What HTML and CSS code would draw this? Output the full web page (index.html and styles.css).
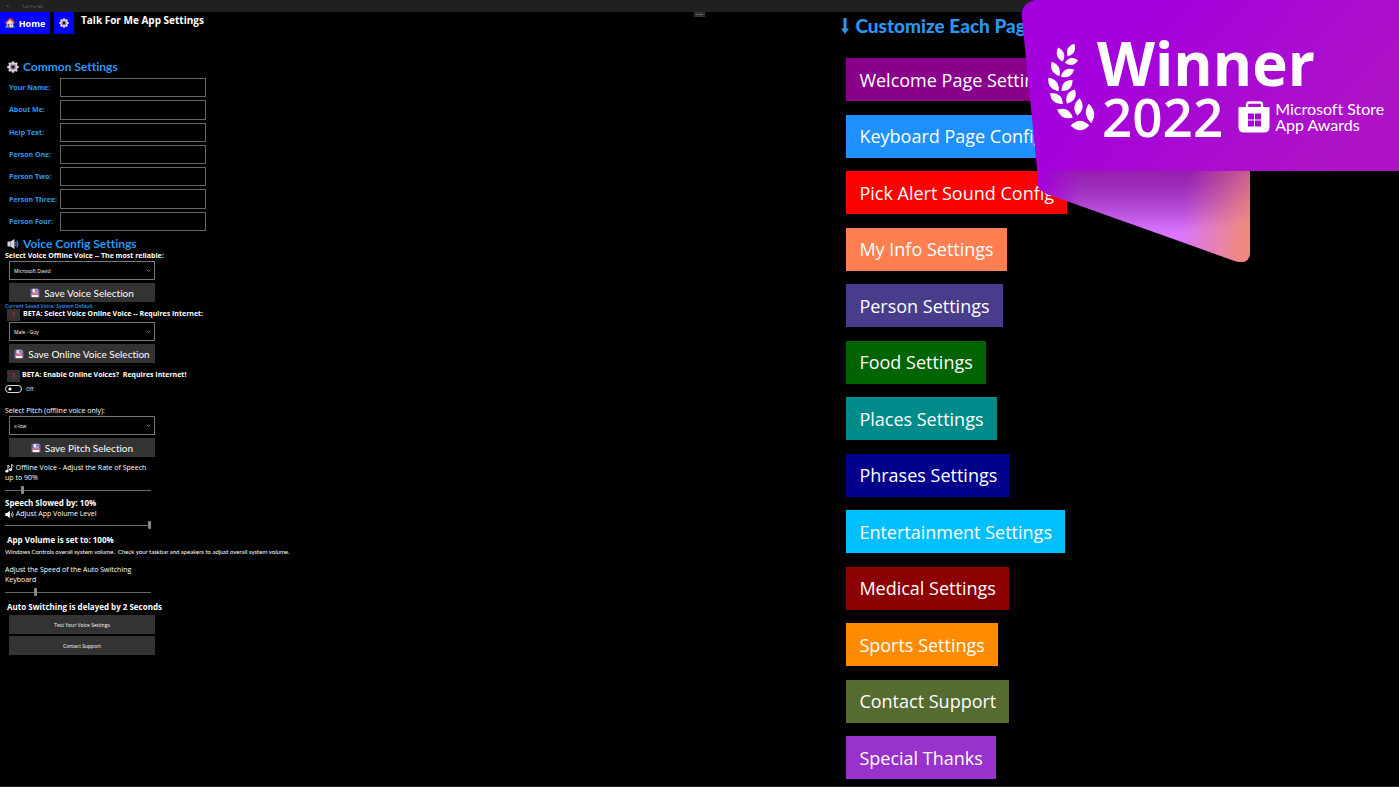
FILE: index.html
```html
<!DOCTYPE html>
<html lang="en">
<head>
<meta charset="utf-8">
<title>Talk For Me</title>
<link rel="stylesheet" href="styles.css">
</head>
<body>
<svg class="defs" aria-hidden="true">
  <symbol id="gear" viewBox="0 0 24 24">
    <g fill="#d9cfe0">
      <rect x="9.5" y="0.5" width="5" height="23" rx="1.5"/>
      <rect x="9.5" y="0.5" width="5" height="23" rx="1.5" transform="rotate(45 12 12)"/>
      <rect x="9.5" y="0.5" width="5" height="23" rx="1.5" transform="rotate(90 12 12)"/>
      <rect x="9.5" y="0.5" width="5" height="23" rx="1.5" transform="rotate(135 12 12)"/>
      <circle cx="12" cy="12" r="9"/>
    </g>
    <circle cx="12" cy="12" r="6" fill="#8d8496"/>
    <circle cx="12" cy="12" r="3.6" fill="#15131a"/>
    <path d="M12 5v4M12 15v4M5 12h4M15 12h4" stroke="#d9cfe0" stroke-width="1.6"/>
  </symbol>
  <symbol id="floppy" viewBox="0 0 24 24">
    <path d="M1 2h19l3 3v17H1z" fill="#6f5aa8"/>
    <rect x="6" y="2" width="12" height="9" fill="#efe6f4"/>
    <rect x="13" y="3" width="3" height="6" fill="#3c2f63"/>
    <rect x="4" y="13" width="16" height="9" fill="#f7f1f5"/>
    <rect x="4" y="13" width="16" height="3.5" fill="#e0505c"/>
  </symbol>
  <symbol id="mark" viewBox="0 0 12 12">
    <path d="M5 4.200C5.200 3.300 7.200 3.500 6.900 4.700c-0.100 0.700-0.900 0.900-0.900 1.900" fill="none" stroke="#d0182f" stroke-width="1.200"/>
    <rect x="5.400" y="7.400" width="1.200" height="1.200" fill="#d0182f"/>
  </symbol>
</svg>

<header class="titlebar">
  <svg class="back" viewBox="0 0 10 10"><path d="M9 5H1.500M4.500 2l-3 3 3 3" fill="none" stroke="#777"/></svg>
  <span>Talk For Me</span>
  <i class="grip"></i>
</header>

<main class="page">
  <section class="left">
    <div class="toolbar">
      <button class="home">
        <svg viewBox="0 0 24 24"><rect x="16" y="2" width="4" height="8" fill="#b4443c"/><path d="M4 11l8-8 8 8v12H4z" fill="#f3e3d3"/><path d="M0.500 12.500L12 1.500l11.500 11" fill="none" stroke="#d8483f" stroke-width="3.500"/><rect x="6" y="14" width="5" height="9" fill="#8f5b3b"/><rect x="14" y="13" width="4" height="4" fill="#4aa3e0"/><path d="M0 23c0-5 5-5 5 0zM17 23c0-5 7-5 7 0z" fill="#3fae49"/></svg>
        Home
      </button>
      <button class="cog" aria-label="Settings"><svg viewBox="0 0 24 24"><use href="#gear"/></svg></button>
      <h1>Talk For Me App Settings</h1>
    </div>

    <h2 class="section common"><svg viewBox="0 0 24 24"><use href="#gear"/></svg>Common Settings</h2>
    <form class="fields">
      <label for="f1">Your Name:</label><input id="f1" type="text">
      <label for="f2">About Me:</label><input id="f2" type="text">
      <label for="f3">Help Text:</label><input id="f3" type="text">
      <label for="f4">Person One:</label><input id="f4" type="text">
      <label for="f5">Person Two:</label><input id="f5" type="text">
      <label for="f6">Person Three:</label><input id="f6" type="text">
      <label for="f7">Person Four:</label><input id="f7" type="text">
    </form>

    <h2 class="section voice"><svg viewBox="0 0 24 24"><path d="M1 7h6l8-5v20l-8-5H1z" fill="#d9cfe0"/><path d="M7 7v10" stroke="#8d8496" stroke-width="1.500"/><path d="M17 8q3 4 0 8M19.500 5q5 7 0 14" fill="none" stroke="#4b9fe6" stroke-width="2"/></svg>Voice Config Settings</h2>
    <label class="line strong" for="offline">Select Voice Offline Voice -- The most reliable:</label>
    <select id="offline" class="control"><option>Microsoft David</option></select>
    <button class="control save"><svg viewBox="0 0 24 24"><use href="#floppy"/></svg>Save Voice Selection</button>
    <p class="saved">Current Saved Voice: System Default</p>
    <div class="beta">
      <button class="help" aria-label="Help"><svg viewBox="0 0 12 12"><use href="#mark"/></svg></button>
      <label class="line strong" for="online">BETA: Select Voice Online Voice -- Requires Internet:</label>
    </div>
    <select id="online" class="control after-beta"><option>Male - Guy</option></select>
    <button class="control save"><svg viewBox="0 0 24 24"><use href="#floppy"/></svg>Save Online Voice Selection</button>
    <div class="beta enable">
      <button class="help" aria-label="Help"><svg viewBox="0 0 12 12"><use href="#mark"/></svg></button>
      <span class="line strong">BETA: Enable Online Voices?&nbsp; Requires Internet!</span>
    </div>
    <label class="switch"><input type="checkbox">Off</label>

    <label class="line pitch" for="pitch">Select Pitch (offline voice only):</label>
    <select id="pitch" class="control"><option>x-low</option></select>
    <button class="control save"><svg viewBox="0 0 24 24"><use href="#floppy"/></svg>Save Pitch Selection</button>

    <label class="line wrap rate" for="rate"><svg viewBox="0 0 24 24"><path d="M8 18V3l5 5M18 14V1l5 5" fill="none" stroke="#fff" stroke-width="2.500"/><ellipse cx="5" cy="19" rx="4" ry="3.500" fill="#fff"/><ellipse cx="15" cy="15" rx="4" ry="3.500" fill="#fff"/></svg> Offline Voice - Adjust the Rate of Speech up to 90%</label>
    <input class="slider" id="rate" type="range" value="11">
    <p class="status first">Speech Slowed by: 10%</p>
    <label class="line" for="volume"><svg viewBox="0 0 24 24"><path d="M1 8h5l7-6v20l-7-6H1z" fill="#fff"/><path d="M16 8q3 4 0 8M19 4q6 8 0 16" fill="none" stroke="#fff" stroke-width="2"/></svg> Adjust App Volume Level</label>
    <input class="slider" id="volume" type="range" value="100">
    <p class="status inset">App Volume is set to: 100%</p>
    <p class="note">Windows Controls overall system volume.&nbsp; Check your taskbar and speakers to adjust overall system volume.</p>
    <label class="line wrap speed" for="speed">Adjust the Speed of the Auto Switching Keyboard</label>
    <input class="slider" id="speed" type="range" value="20">
    <p class="status inset">Auto Switching is delayed by 2 Seconds</p>
    <button class="control plain">Test Your Voice Settings</button>
    <button class="control plain">Contact Support</button>
  </section>

  <section class="right">
    <h2 class="customize"><svg viewBox="0 0 8 16"><path d="M2.500 0h3v10.500H8L4 16 0 10.500h2.500z" fill="#2b98f0"/></svg>Customize Each Page</h2>
    <nav class="pages">
      <button class="welcome">Welcome Page Settings</button>
      <button class="keyboard">Keyboard Page Config</button>
      <button class="alert">Pick Alert Sound Config</button>
      <button class="info">My Info Settings</button>
      <button class="person">Person Settings</button>
      <button class="food">Food Settings</button>
      <button class="places">Places Settings</button>
      <button class="phrases">Phrases Settings</button>
      <button class="fun">Entertainment Settings</button>
      <button class="medical">Medical Settings</button>
      <button class="sports">Sports Settings</button>
      <button class="contact">Contact Support</button>
      <button class="thanks">Special Thanks</button>
    </nav>
  </section>
</main>

<aside class="banner">
  <svg class="ribbon" viewBox="0 0 378 264">
    <defs>
      <linearGradient id="face" x1="0" y1="0" x2="1" y2="0.450"><stop offset="0.300" stop-color="#a400dc"/><stop offset="1" stop-color="#ae14c6"/></linearGradient>
      <linearGradient id="fold" x1="0" y1="170" x2="0" y2="240" gradientUnits="userSpaceOnUse"><stop offset="0" stop-color="#8d0fbd"/><stop offset="0.300" stop-color="#a234cf"/><stop offset="0.900" stop-color="#d975ff"/></linearGradient>
      <linearGradient id="warm" x1="165" y1="190" x2="228" y2="200" gradientUnits="userSpaceOnUse"><stop offset="0" stop-color="#f08a80" stop-opacity="0"/><stop offset="1" stop-color="#f08a80"/></linearGradient>
      <linearGradient id="shade" x1="0" y1="170" x2="0" y2="225" gradientUnits="userSpaceOnUse"><stop offset="0" stop-color="#a0309a" stop-opacity="0.450"/><stop offset="1" stop-color="#a0309a" stop-opacity="0"/></linearGradient>
      <linearGradient id="blend" x1="16" y1="0" x2="60" y2="0" gradientUnits="userSpaceOnUse"><stop offset="0" stop-color="#a400dc"/><stop offset="1" stop-color="#a400dc" stop-opacity="0"/></linearGradient>
    </defs>
    <g>
      <path d="M17 170H229V252Q229 265 214 261L26 194Q17 190 17 184Z" fill="url(#fold)"/>
      <path d="M17 170H229V252Q229 265 214 261L26 194Q17 190 17 184Z" fill="url(#warm)"/>
      <path d="M17 170H229V252Q229 265 214 261L26 194Q17 190 17 184Z" fill="url(#shade)"/>
      <path d="M17 170H60V206L26 194Q17 190 17 184Z" fill="url(#blend)"/>
    </g>
    <path d="M14 0H378V171H36Q22 171 18 189L1 18Q-1 4 14 0Z" fill="url(#face)"/>
    <g fill="#fff" transform="translate(14 -1)">
      <path d="M0-6.500Q5.500 0 0 6.500Q-5.500 0 0-6.500Z" transform="translate(36 51) rotate(28) scale(1.300 1.100)"/>
      <path d="M0-6.500Q5.500 0 0 6.500Q-5.500 0 0-6.500Z" transform="translate(25.500 55.500) rotate(-18) scale(1.300 1.150)"/>
      <path d="M0-6.500Q5.500 0 0 6.500Q-5.500 0 0-6.500Z" transform="translate(36.500 62.500) rotate(80) scale(1.300 1.050)"/>
      <path d="M0-6.500Q5.500 0 0 6.500Q-5.500 0 0-6.500Z" transform="translate(20.500 70) rotate(-28) scale(1.350 1.250)"/>
      <path d="M0-6.500Q5.500 0 0 6.500Q-5.500 0 0-6.500Z" transform="translate(32.500 74) rotate(63) scale(1.400 1.150)"/>
      <path d="M0-6.500Q5.500 0 0 6.500Q-5.500 0 0-6.500Z" transform="translate(18.500 85.500) rotate(-38) scale(1.450 1.300)"/>
      <path d="M0-6.500Q5.500 0 0 6.500Q-5.500 0 0-6.500Z" transform="translate(32 86.500) rotate(45) scale(1.450 1.200)"/>
      <path d="M0-6.500Q5.500 0 0 6.500Q-5.500 0 0-6.500Z" transform="translate(21.500 99.500) rotate(-50) scale(1.550 1.300)"/>
      <path d="M0-6.500Q5.500 0 0 6.500Q-5.500 0 0-6.500Z" transform="translate(36 97.500) rotate(30) scale(1.500 1.250)"/>
      <path d="M0-6.500Q5.500 0 0 6.500Q-5.500 0 0-6.500Z" transform="translate(30 114.500) rotate(-63) scale(1.550 1.350)"/>
      <path d="M0-6.500Q5.500 0 0 6.500Q-5.500 0 0-6.500Z" transform="translate(43.500 108) rotate(8) scale(1.500 1.350)"/>
      <path d="M0-6.500Q5.500 0 0 6.500Q-5.500 0 0-6.500Z" transform="translate(45 126.500) rotate(90) scale(1.700 1.450)"/>
      <path d="M0-6.500Q5.500 0 0 6.500Q-5.500 0 0-6.500Z" transform="translate(55 114.500) rotate(-8) scale(1.500 1.500)"/>
    </g>
  </svg>
  <div class="award">
    <strong>Winner</strong>
    <div class="award-row">
      <span class="year">2022</span>
      <svg class="bag" viewBox="0 0 32 32"><path d="M9 7V3.500Q9 1.500 11 1.500H22Q24 1.500 24 3.500V7" fill="none" stroke="#fff" stroke-width="2.400"/><path d="M1.500 6H30.500Q31.500 6 31.500 7V26Q31.500 31.500 26 31.500H6Q0.500 31.500 0.500 26V7Q0.500 6 1.500 6Z" fill="#fff"/><path d="M10 12.500h6v6h-6zM17 12.500h6v6h-6zM10 19.500h6v6h-6zM17 19.500h6v6h-6z" fill="#a808d5"/></svg>
      <span class="store">Microsoft Store<br>App Awards</span>
    </div>
  </div>
</aside>
</body>
</html>
```
FILE: styles.css
```css
* { box-sizing: border-box; }
body {
  margin: 0;
  min-height: 100vh;
  display: flex;
  flex-direction: column;
  position: relative;
  overflow-x: hidden;
  background: #000;
  color: #fff;
  font-family: "Open Sans", "Noto Sans", sans-serif;
  font-size: 7px;
}
h1, h2, p { margin: 0; }
button, input, select { font-family: inherit; font-size: inherit; color: inherit; margin: 0; border-radius: 0; }
button { border: 0; }
.defs { position: absolute; width: 0; height: 0; }
h2, .save, .note, .store { font-family: Lato, "Open Sans", sans-serif; font-variant-ligatures: none; }

.titlebar {
  position: relative;
  display: flex;
  align-items: center;
  gap: 12px;
  height: 12px;
  padding-left: 6px;
  background: #202020;
  color: #777;
  font-size: 4px;
}
.back { width: 4px; height: 4px; }
.grip {
  position: absolute;
  left: 50%;
  top: 12px;
  width: 11px;
  height: 5px;
  margin-left: -6px;
  border: 1px solid #333;
  background: linear-gradient(#666, #666) center / 7px 1px no-repeat #2c2c2c;
}

.page { flex: 1; display: grid; grid-template-columns: 60% 40%; border-bottom: 1px solid #222; }
.left { display: flex; flex-direction: column; align-items: flex-start; padding-left: 5px; }

.toolbar { display: flex; align-items: flex-start; gap: 4px; margin-left: -5px; }
.toolbar button { display: flex; align-items: center; justify-content: center; gap: 4px; height: 22px; padding: 0 4px; background: #00f; font-size: 9px; font-weight: 700; }
.toolbar .home { min-width: 50px; }
.toolbar .cog { width: 20px; }
.toolbar svg { flex: none; width: 10px; height: 10px; }
h1 { margin-left: 3px; font-size: 10px; line-height: 16px; font-weight: 700; }

.section { display: flex; align-items: center; gap: 4px; margin-left: 2px; color: #2b98f0; font-size: 12px; line-height: 14px; font-weight: 700; }
.section svg { width: 12px; height: 12px; }
.common { margin-top: 26px; }
.voice { margin-top: 6px; }

.fields {
  display: grid;
  grid-template-columns: 51px 146px;
  grid-auto-rows: 1fr;
  row-gap: 3px;
  align-items: stretch;
  min-height: 153px;
  margin: 4px 0 0 4px;
  color: #2b98f0;
  font-weight: 700;
}
.fields label { align-self: center; white-space: nowrap; }
.fields input { min-width: 0; padding: 0 4px; border: 1px solid #666; background: #000; }

.line { line-height: 10px; }
.strong { font-weight: 700; }
.line svg { width: 9px; height: 9px; vertical-align: middle; }
.wrap { max-width: 146px; }
.control { width: 146px; height: 19px; margin-left: 4px; flex: none; }
select.control {
  appearance: none;
  padding: 0 4px;
  border: 1px solid #777;
  font-size: 5px;
  background: #000 url("data:image/svg+xml,%3Csvg xmlns='http://www.w3.org/2000/svg' viewBox='0 0 8 8'%3E%3Cpath d='M1 2.500l3 3 3-3' fill='none' stroke='%23ccc'/%3E%3C/svg%3E") no-repeat right 3px center / 5px 5px;
}
.save { display: flex; align-items: center; justify-content: center; gap: 4px; margin-top: 3px; padding: 0; background: #333; font-size: 10px; white-space: nowrap; }
.save svg { flex: none; width: 10px; height: 10px; }
.saved { margin-top: 1px; color: #2b98f0; font-size: 5px; line-height: 6px; font-weight: 600; }
.beta { display: flex; align-items: flex-start; gap: 3px; margin-left: 2px; }
.enable { margin-top: 7px; gap: 2px; }
.help { display: flex; width: 13px; height: 12px; padding: 0; background: #333; }
.help svg { width: 13px; height: 12px; }
.after-beta { margin-top: 1px; }
.switch { display: flex; align-items: center; gap: 4px; height: 8px; margin-top: 3px; font-size: 5px; }
.switch input { appearance: none; width: 17px; height: 8px; border: 1px solid #ddd; border-radius: 4px; background: radial-gradient(circle at 4px 3px, #fff 1px, transparent 2px); }
.pitch { margin-top: 13px; }
.rate { margin-top: 6px; }
.speed { margin-top: 8px; }

.slider { appearance: none; width: 146px; height: 8px; margin-top: 3px; background: linear-gradient(#666, #666) center / 100% 1px no-repeat; }
#volume { margin-top: 2px; }
.slider::-webkit-slider-thumb { appearance: none; width: 3px; height: 8px; border-radius: 1px; background: #888; }
.slider::-moz-range-thumb { width: 3px; height: 8px; border: 0; border-radius: 1px; background: #888; }
.status { font-size: 8px; line-height: 12px; font-weight: 700; }
.first { margin-top: 3px; }
.inset { margin: 5px 0 0 2px; }
.note { margin-top: 1px; font-size: 6px; line-height: 10px; }
.plain { margin-top: 2px; background: #333; font-size: 5px; }

.right { display: flex; flex-direction: column; padding: 2px 0 7px 7px; }
.customize { display: flex; align-items: center; gap: 6px; color: #2b98f0; font-size: 19px; line-height: 24px; font-weight: 900; white-space: nowrap; }
.customize svg { width: 8px; height: 16px; margin-left: -5px; }
.pages { flex: 1; display: flex; flex-direction: column; align-items: flex-start; justify-content: space-between; margin-top: 20px; }
.pages button { height: 43px; padding: 0 13px; font-size: 18px; white-space: nowrap; }
.welcome { background: #8b008b; }
.keyboard { background: #1e90ff; }
.alert { background: #f00; }
.info { background: #ff7f50; }
.person { background: #483d8b; }
.food { background: #006400; }
.places { background: #008b8b; }
.phrases { background: #00008b; }
.fun { background: #00bfff; }
.medical { background: #8b0000; }
.sports { background: #ff8c00; }
.contact { background: #556b2f; }
.thanks { background: #9932cc; }

.banner { position: absolute; top: 0; right: 0; width: 378px; }
.ribbon { display: block; width: 100%; }
.award { position: absolute; inset: 0 0 auto 76px; padding-top: 33px; }
.award strong { display: block; font-size: 60px; line-height: 60px; font-weight: 700; }
.award-row { display: flex; align-items: center; margin-left: 5px; }
.year { font-size: 53px; line-height: 48px; font-weight: 600; }
.bag { flex: none; width: 32px; height: 32px; margin: 0 5px 0 15px; }
.store { font-size: 16px; line-height: 16px; white-space: nowrap; }
```
